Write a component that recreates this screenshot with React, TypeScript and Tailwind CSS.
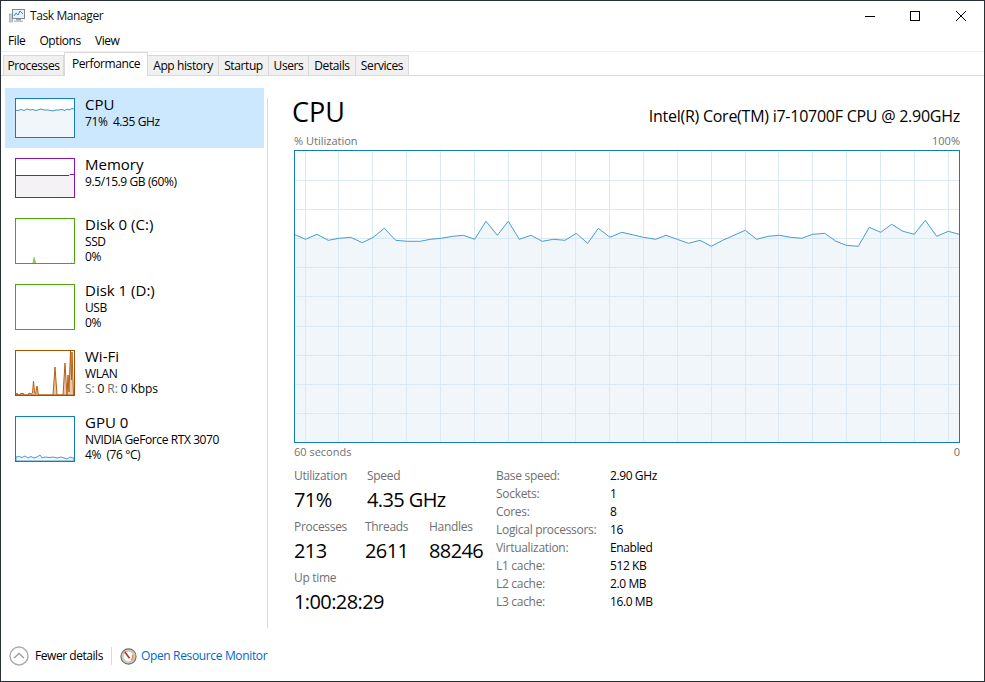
import React from 'react';

const TABS = [
  { label: 'Processes', w: 'w-[61px]' },
  { label: 'Performance', w: 'w-[84px]' },
  { label: 'App history', w: 'w-[71px]' },
  { label: 'Startup', w: 'w-[50px]' },
  { label: 'Users', w: 'w-[40px]' },
  { label: 'Details', w: 'w-[47px]' },
  { label: 'Services', w: 'w-[53px]' },
];

const left = [
  [28, 313], [61, 328], [96, 313], [130, 331], [163, 325], [197, 322], [232, 338], [265, 322], [298, 295], [332, 331],
  [367, 334], [406, 334], [435, 328], [469, 325], [503, 319], [535, 316], [569, 328], [603, 274], [637, 316], [670, 274],
  [703, 328], [738, 316], [772, 334], [805, 328], [840, 331], [874, 310], [908, 340], [940, 295], [975, 322], [1010, 307],
].map(([x, y]) => [x / 3 + 285 - 294, y / 3 + 130 - 150]);

const right = [
  [0, 316], [25, 322], [62, 328], [93, 316], [127, 328], [160, 340], [195, 331], [229, 349], [263, 331], [297, 316],
  [331, 301], [365, 328], [399, 319], [433, 316], [467, 322], [500, 325], [533, 313], [569, 310], [603, 334], [634, 346],
  [670, 349], [703, 292], [737, 307], [770, 283], [804, 304], [838, 313], [871, 271], [905, 319], [940, 304], [972, 313],
].map(([x, y]) => [x / 3 + 635 - 294, y / 3 + 130 - 150]);

const points = [...left, ...right];
const line = points.map(([x, y]) => `${x.toFixed(1)},${y.toFixed(1)}`).join(' ');

const MainChart = () => {
  const verticals = Array.from({ length: 20 }, (_, i) => Math.floor(11 + i * 33.85) + 0.5);
  const horizontals = Array.from({ length: 9 }, (_, i) => Math.floor(30 + i * 29.2) + 0.5);
  return (
    <svg width="666" height="293" viewBox="0 0 666 293" className="block">
      <rect width="666" height="293" fill="#fff" />
      <polygon points={`0,292 ${line} 666,${points[points.length - 1][1]} 666,292`} fill="#f1f6fa" />
      {verticals.map((x) => (
        <line key={x} x1={x} x2={x} y1="0" y2="293" stroke="#d9eaf4" />
      ))}
      {horizontals.map((y) => (
        <line key={y} x1="0" x2="666" y1={y} y2={y} stroke="#d9eaf4" />
      ))}
      <polyline points={line} fill="none" stroke="#4a9ccd" strokeWidth="1" />
      <rect x="0.5" y="0.5" width="665" height="292" fill="none" stroke="#117dbb" />
    </svg>
  );
};

type ThumbProps = { h: number; color: string; fill: string; d?: string; stroke?: string };

const Thumb: React.FC<ThumbProps> = ({ h, color, fill, d, stroke }) => (
  <svg width={60} height={h} viewBox={`0 0 60 ${h}`} className="block shrink-0">
    <rect width={60} height={h} fill="#fff" />
    {d && <path d={d} fill={fill} stroke={stroke ?? 'none'} strokeWidth="1" />}
    <rect x="0.5" y="0.5" width={59} height={h - 1} fill="none" stroke={color} />
  </svg>
);

const SIDEBAR = [
  {
    name: 'CPU',
    lines: ['71%  4.35 GHz'],
    h: 60,
    selected: true,
    thumb: (
      <svg width="60" height="40" viewBox="0 0 60 40" className="block shrink-0">
        <rect width="60" height="40" fill="#fff" />
        <path
          d="M0 12L3 12.5L6 11.5L9 12.5L12 11L15 12L18 11.5L20 12.5L23 12L26 11L29 12L33 12L36 12.5L38 13L41 12L44 12L47 11.5L50 12.5L52 11L54 12L57 10.5L60 11.5V40H0Z"
          fill="#f1f6fa"
        />
        <polyline
          points="0,12 3,12.5 6,11.5 9,12.5 12,11 15,12 18,11.5 20,12.5 23,12 26,11 29,12 33,12 36,12.5 38,13 41,12 44,12 47,11.5 50,12.5 52,11 54,12 57,10.5 60,11.5"
          fill="none"
          stroke="#3b97cc"
        />
        <rect x="0.5" y="0.5" width="59" height="39" fill="none" stroke="#117dbb" />
      </svg>
    ),
  },
  {
    name: 'Memory',
    lines: ['9.5/15.9 GB (60%)'],
    h: 60,
    thumb: <Thumb h={40} color="#8b12ae" fill="#f4f2f4" stroke="#8b12ae" d="M0 17.5H54L55 16.5H60V40H0Z" />,
  },
  {
    name: 'Disk 0 (C:)',
    lines: ['SSD', '0%'],
    h: 66,
    thumb: <Thumb h={46} color="#4da60c" fill="#8cc653" d="M17.5 45L18.7 39L19.5 39L21 45ZM56 45L56.5 44L57 45Z" />,
  },
  { name: 'Disk 1 (D:)', lines: ['USB', '0%'], h: 66, thumb: <Thumb h={46} color="#4da60c" fill="#fff" /> },
  {
    name: 'Wi-Fi',
    lines: ['WLAN', 'wifi'],
    h: 66,
    thumb: (
      <Thumb
        h={46}
        color="#a74f01"
        fill="#e8c9ae"
        stroke="#b85f14"
        d="M1 45L2 43L3 45L5 45L6 43L7 44L8 43L9 45L13 45L14 43L16 44L17.5 43L18.5 31L19.5 42L20.5 44L22 36L23.5 45L38 45L40 17L42 45L48 45L50 13L51 30L52 45L53 25L54 42L55.5 1L56.5 30L57 2L58.5 45Z"
      />
    ),
  },
  {
    name: 'GPU 0',
    lines: ['NVIDIA GeForce RTX 3070', '4%  (76 °C)'],
    h: 66,
    thumb: (
      <svg width="60" height="46" viewBox="0 0 60 46" className="block shrink-0">
        <rect width="60" height="46" fill="#fff" />
        <path
          d="M1 41L4 40.5L7 41.5L10 40L13 42L16 40.5L19 42L22 41L25 39L27 42L30 41L34 41.5L38 41L42 42L46 41L49 42L52 43L55 41L58 42L59 42V45H1Z"
          fill="#f1f6fa"
          stroke="#4a9ccd"
        />
        <rect x="0.5" y="0.5" width="59" height="45" fill="none" stroke="#117dbb" />
      </svg>
    ),
  },
];

const SPECS = [
  ['Base speed:', '2.90 GHz'],
  ['Sockets:', '1'],
  ['Cores:', '8'],
  ['Logical processors:', '16'],
  ['Virtualization:', 'Enabled'],
  ['L1 cache:', '512 KB'],
  ['L2 cache:', '2.0 MB'],
  ['L3 cache:', '16.0 MB'],
];

const Stat = ({ label, value, className }: { label: string; value: string; className?: string }) => (
  <div className={className}>
    <div className="h-[18px] text-[12px] leading-[18px] text-[#707070]">{label}</div>
    <div className="mt-[1px] h-[28px] text-[20px] leading-[28px] tracking-[-0.6px] text-black">{value}</div>
  </div>
);

const AppIcon = () => (
  <svg width="16" height="16" viewBox="0 0 16 16" className="block">
    <rect x="0.5" y="6" width="3" height="8" fill="#c9cfd3" stroke="#8d979d" strokeWidth="0.6" />
    <rect x="3.5" y="1.5" width="12" height="9" fill="#e8f2f8" stroke="#7e8a92" />
    <polyline points="5,8 7,5 9,7 11,3 14,6" fill="none" stroke="#2f8fc7" />
    <rect x="7" y="11" width="5" height="1.5" fill="#9aa4aa" />
    <rect x="5" y="12.5" width="9" height="1.5" fill="#bcc4c9" />
  </svg>
);

const MonitorIcon = () => (
  <svg width="17" height="17" viewBox="0 0 17 17" className="block">
    <circle cx="8.5" cy="8.5" r="7.6" fill="#d6d1c9" stroke="#716c66" strokeWidth="1.1" />
    <circle cx="8.5" cy="8.5" r="5.4" fill="#fff" stroke="#b8ab9a" strokeWidth="0.7" />
    <path d="M12.2 6.6A4.2 4.2 0 0 1 11 12" fill="none" stroke="#e08a3a" strokeWidth="1.3" />
    <line x1="4.8" y1="3.8" x2="9.5" y2="10.2" stroke="#c8281e" strokeWidth="1.6" />
  </svg>
);

const CollapseIcon = () => (
  <svg width="20" height="20" viewBox="0 0 20 20" className="block">
    <circle cx="10" cy="10" r="9" fill="#fff" stroke="#ababab" strokeWidth="1.4" />
    <polyline points="5,12 10,7.5 15,12" fill="none" stroke="#a0a0a0" strokeWidth="1.5" />
  </svg>
);

const WinButton = ({ w, children }: { w: string; children: React.ReactNode }) => (
  <div className={`flex items-center justify-center ${w}`}>
    <svg width="10" height="10" viewBox="0 0 10 10" className="block" fill="none" stroke="#000">
      {children}
    </svg>
  </div>
);

export default function App() {
  return (
    <div className="flex h-[682px] w-[985px] flex-col overflow-hidden border border-[#2a3038] bg-white font-['Open_Sans',sans-serif] text-[12px] tracking-[-0.4px] text-black">
      <div className="flex h-[30px] shrink-0 items-center pl-[8px]">
        <AppIcon />
        <span className="ml-[5px] text-[12px] text-[#111]">Task Manager</span>
        <div className="ml-auto flex h-full">
          <WinButton w="w-[45px]"><line x1="0" x2="10" y1="5.5" y2="5.5" /></WinButton>
          <WinButton w="w-[46px]"><rect x="0.5" y="0.5" width="9" height="9" /></WinButton>
          <WinButton w="w-[46px]"><path d="M0 0L10 10M10 0L0 10" /></WinButton>
        </div>
      </div>
      <div className="flex h-[20px] shrink-0 items-center gap-[14px] pl-[7px]">
        <span>File</span>
        <span>Options</span>
        <span>View</span>
      </div>
      <div className="h-[1px] shrink-0 bg-[#f0f0f0]" />
      <div className="flex h-[24px] shrink-0 items-end border-b border-[#d9d9d9] pl-[2px]">
        {TABS.map((t) =>
          t.label === 'Performance' ? (
            <div key={t.label} className={`relative -mb-[1px] flex h-[24px] items-start justify-center border-x border-t border-[#d9d9d9] bg-white pt-[2px] ${t.w}`}>
              {t.label}
            </div>
          ) : (
            <div key={t.label} className={`flex h-[20px] items-center justify-center border-t border-r border-[#d9d9d9] bg-[#f0f0f0] first:border-l ${t.w}`}>
              {t.label}
            </div>
          ),
        )}
      </div>
      <div className="flex min-h-0 flex-1 pt-[12px]">
        <div className="w-[266px] shrink-0 pl-[4px]">
          {SIDEBAR.map((item) => (
            <div
              key={item.name}
              style={{ height: item.h }}
              className={`flex w-[259px] pl-[10px] pt-[10px] ${item.selected ? 'bg-[#cce8ff]' : ''}`}
            >
              {item.thumb}
              <div className="ml-[10px] -mt-[4px]">
                <div className="h-[20px] text-[15px] leading-[20px] tracking-normal">{item.name}</div>
                {item.lines.map((l) =>
                  l === 'wifi' ? (
                    <div key={l} className="h-[15px] whitespace-pre text-[12px] leading-[15px] tracking-[-0.1px]">
                      <span className="text-[#707070]">S:</span> 0 <span className="text-[#707070]">R:</span> 0 Kbps
                    </div>
                  ) : (
                    <div key={l} className="h-[15px] whitespace-pre text-[12px] leading-[15px]">
                      {l}
                    </div>
                  ),
                )}
              </div>
            </div>
          ))}
        </div>
        <div className="mt-[10px] mb-[1px] w-[1px] shrink-0 bg-[#d9d9d9]" />
        <div className="min-w-0 flex-1 pl-[24px] pt-[7px]">
          <div className="mb-[5px] flex h-[33px] w-[668px] items-center justify-between">
            <span className="text-[27px] leading-[33px] tracking-normal">CPU</span>
            <span className="pt-[8px] text-[16px] tracking-[-0.25px]">Intel(R) Core(TM) i7-10700F CPU @ 2.90GHz</span>
          </div>
          <div className="ml-[2px] flex h-[17px] w-[666px] items-center justify-between text-[11px] tracking-normal text-[#707070]">
            <span>% Utilization</span>
            <span>100%</span>
          </div>
          <div className="ml-[2px]">
            <MainChart />
          </div>
          <div className="ml-[2px] flex h-[18px] w-[666px] items-center justify-between text-[11px] tracking-normal text-[#707070]">
            <span>60 seconds</span>
            <span>0</span>
          </div>
          <div className="ml-[2px] mt-[6px] flex">
            <div className="w-[202px] tracking-[-0.3px]">
              <div className="flex h-[51px]">
                <Stat label="Utilization" value="71%" className="w-[73px]" />
                <Stat label="Speed" value="4.35 GHz" />
              </div>
              <div className="flex h-[51px]">
                <Stat label="Processes" value="213" className="w-[71px]" />
                <Stat label="Threads" value="2611" className="w-[64px]" />
                <Stat label="Handles" value="88246" />
              </div>
              <Stat label="Up time" value="1:00:28:29" />
            </div>
            <div className="grid grid-cols-[114px_1fr] auto-rows-[18px] leading-[18px]">
              {SPECS.map(([k, v]) => (
                <React.Fragment key={k}>
                  <span className="tracking-[-0.3px] text-[#707070]">{k}</span>
                  <span>{v}</span>
                </React.Fragment>
              ))}
            </div>
          </div>
        </div>
      </div>
      <div className="flex h-[52px] shrink-0 items-center pl-[8px] pt-[2px]">
        <CollapseIcon />
        <span className="ml-[6px] tracking-[-0.45px]">Fewer details</span>
        <div className="ml-[8px] mr-[8px] h-[18px] w-[1px] bg-[#d9d9d9]" />
        <MonitorIcon />
        <span className="ml-[4px] tracking-[-0.35px] text-[#0066cc]">Open Resource Monitor</span>
      </div>
    </div>
  );
}
